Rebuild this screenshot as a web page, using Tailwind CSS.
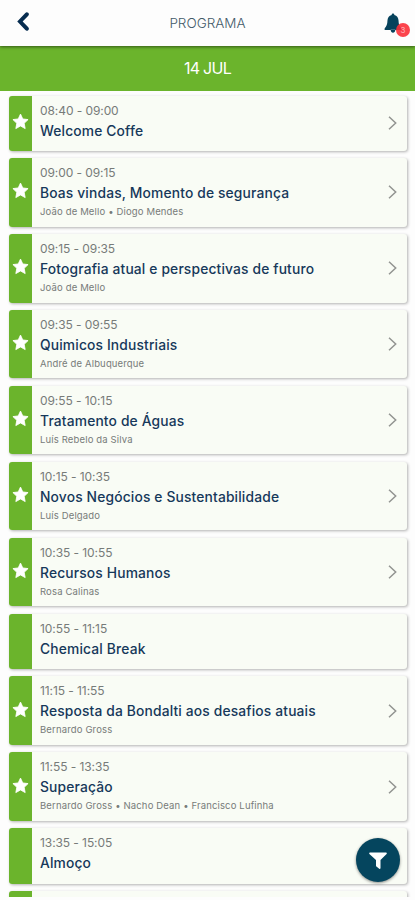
<!DOCTYPE html>
<html lang="pt">
<head>
    <meta charset="utf-8"/>
    <meta content="width=device-width, initial-scale=1.0" name="viewport"/>
    <title>Programa</title>
    <script src="https://cdn.jsdelivr.net/npm/@tailwindcss/browser@4"></script>
</head>
<body class="bg-[#fdfdfd] font-['Inter',sans-serif]">

    <div class="relative w-full h-[900px] flex flex-col overflow-hidden">
        <header class="relative z-10 h-[45.5px] shrink-0 grid grid-cols-[60px_1fr_60px] items-center bg-[#fdfdfd] shadow-[0_1px_3px_rgba(0,0,0,0.5)]">
            <button type="button" aria-label="Voltar" class="pl-[17px] pb-0.5">
                <svg class="w-3 h-[19px]" viewBox="0 0 12 19" fill="none" stroke="#062c4f" stroke-width="4" stroke-linecap="round"><path d="M9.800 2.300 3 9.500l6.800 7.200"/></svg>
            </button>
            <h1 class="text-center text-[13.5px] font-light text-[#435a69] pt-px">PROGRAMA</h1>
            <button type="button" aria-label="Notificações" class="relative h-full">
                <svg class="absolute left-[29px] top-[13px] w-[18px] h-[20px]" viewBox="0 0 18 21" fill="#06425c"><path d="M9 .5c-.9 0-1.400.6-1.400 1.500C4.700 2.700 3.300 5 3.200 8c-.1 4-.9 6-3 8.200V17.800h17.600v-1.600c-2.100-2.200-2.900-4.200-3-8.200-.1-3-1.500-5.300-4.400-6C10.400 1.100 9.900.5 9 .5zM6.500 17.500h5c-.2 1.900-1.200 3.200-2.500 3.200s-2.300-1.300-2.500-3.200z"/></svg>
                <span class="absolute left-[41px] top-[23px] size-[14px] rounded-full bg-[#fb3038]/90 text-[8px] leading-[14px] text-center text-white/60">3</span>
            </button>
        </header>
        <div class="h-[45px] shrink-0 flex items-center justify-center bg-[#6bb42c] text-white text-[16px] tracking-[-0.7px]">14 JUL</div>
        <main id="program" class="h-[806px] shrink-0 flex flex-col gap-[7.5px] pt-[5px] pl-[9px] pr-[8px] overflow-hidden"></main>

        <button type="button" aria-label="Filtrar" class="absolute left-[356px] top-[838px] size-[44px] rounded-full bg-[#05455e] flex items-center justify-center shadow-[0_1px_3px_rgba(0,0,0,0.45)]">
            <svg class="w-[18px] h-[17px]" viewBox="0 0 18 17" fill="#fff"><path d="M1 .5h16c.8 0 1.100.8.6 1.400L11.500 8v8c0 .8-.7 1.100-1.300.7l-2.800-2.100a1 1 0 0 1-.4-.8V8L.4 1.900C-.1 1.300.2.5 1 .5z"/></svg>
        </button>
    </div>

    <script>
        const sessions = [
            { time: '08:40 - 09:00', title: 'Welcome Coffe' },
            { time: '09:00 - 09:15', title: 'Boas vindas, Momento de segurança', speakers: 'João de Mello • Diogo Mendes' },
            { time: '09:15 - 09:35', title: 'Fotografia atual e perspectivas de futuro', speakers: 'João de Mello' },
            { time: '09:35 - 09:55', title: 'Quimicos Industriais', speakers: 'André de Albuquerque' },
            { time: '09:55 - 10:15', title: 'Tratamento de Águas', speakers: 'Luís Rebelo da Silva' },
            { time: '10:15 - 10:35', title: 'Novos Negócios e Sustentabilidade', speakers: 'Luís Delgado' },
            { time: '10:35 - 10:55', title: 'Recursos Humanos', speakers: 'Rosa Calinas' },
            { time: '10:55 - 11:15', title: 'Chemical Break', isBreak: true },
            { time: '11:15 - 11:55', title: 'Resposta da Bondalti aos desafios atuais', speakers: 'Bernardo Gross' },
            { time: '11:55 - 13:35', title: 'Superação', speakers: 'Bernardo Gross • Nacho Dean • Francisco Lufinha' },
            { time: '13:35 - 15:05', title: 'Almoço', isBreak: true },
            { time: '', title: '', isBreak: true }
        ];

        const star = '<svg class="size-[17px] mb-[3px]" viewBox="0 0 24 24" fill="#fff" stroke="#fff" stroke-width="1.2" stroke-linejoin="round"><path d="m12 1.500 3.200 6.900 7.500.9-5.500 5.200 1.400 7.500L12 18.300 5.400 22l1.400-7.500L1.300 9.300l7.500-.9z"/></svg>';
        const chevron = '<svg class="w-[9px] h-[14px] mr-[10px] shrink-0" viewBox="0 0 9 14" fill="none" stroke="#929491" stroke-width="1.5"><path d="m1 .7 6.700 6.300L1 13.300"/></svg>';

        document.getElementById('program').innerHTML = sessions.map(s => `
            <article class="${s.speakers ? 'h-[68.4px]' : 'h-[55.3px]'} shrink-0 flex items-center rounded-[3px] overflow-hidden bg-[#f9fcf5] shadow-[1px_1px_3px_rgba(0,0,0,0.3)]">
                <div class="w-[23px] h-full shrink-0 flex items-center justify-center bg-[#6bb42c]">${s.isBreak ? '' : star}</div>
                <div class="flex-1 h-full pl-[8px] pt-[6px] whitespace-nowrap">
                    <p class="h-[18px] leading-[18px] text-[12px] tracking-[-0.08px] text-[#777b79]">${s.time}</p>
                    <h2 class="h-[22px] leading-[22px] text-[13.8px] font-medium tracking-[0.16px] text-[#16385a]">${s.title}</h2>
                    ${s.speakers ? `<p class="h-[15px] leading-[15px] text-[9.5px] tracking-[0.15px] text-[#777b79]">${s.speakers}</p>` : ''}
                </div>
                ${s.isBreak ? '' : chevron}
            </article>`).join('');
    </script>

</body>
</html>
